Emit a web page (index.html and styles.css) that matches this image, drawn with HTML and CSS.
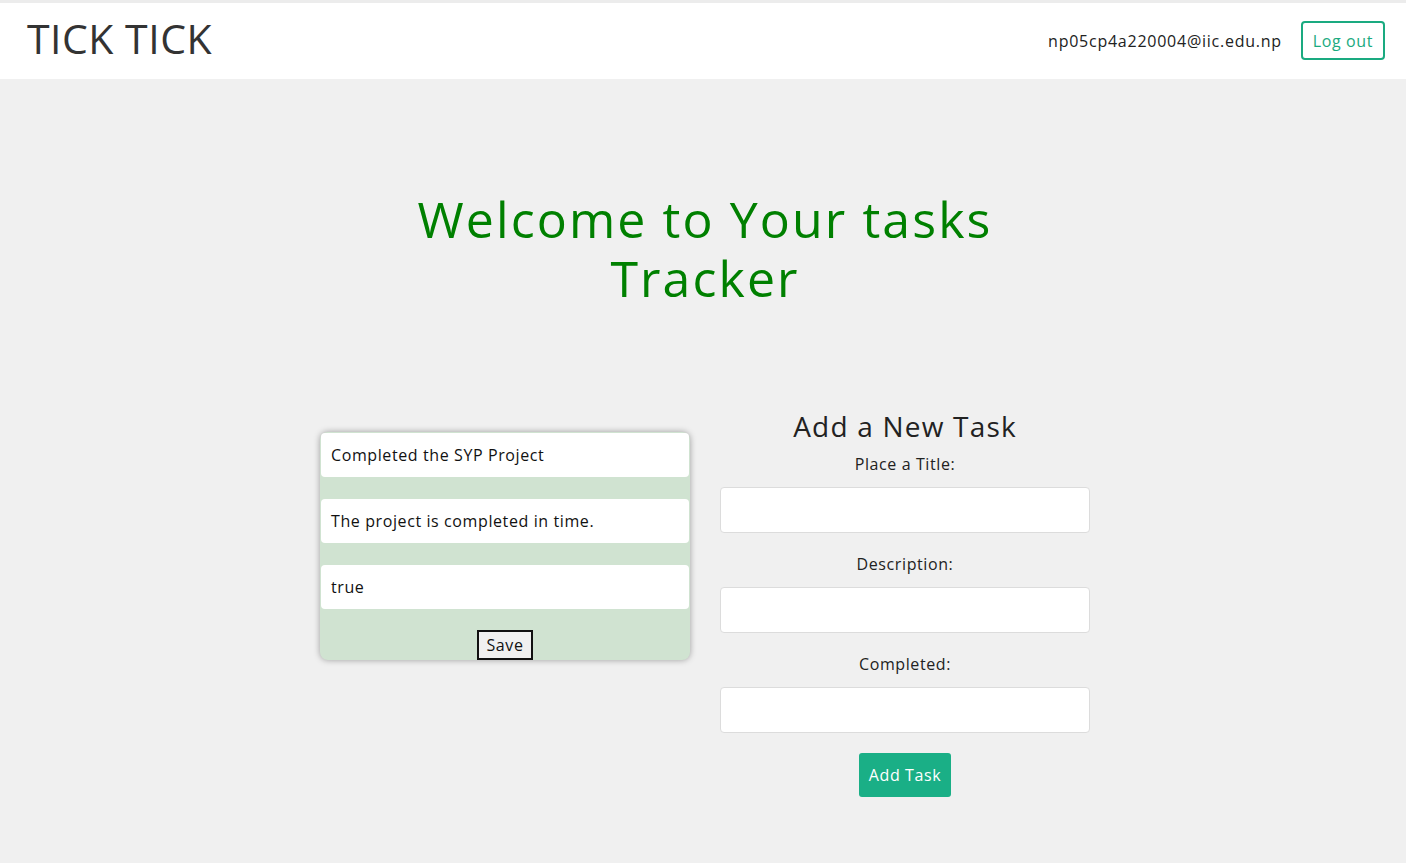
FILE: index.html
```html
<!DOCTYPE html>
<html lang="en">
<head>
<meta charset="utf-8">
<title>TICK TICK</title>
<link rel="stylesheet" href="styles.css">
</head>
<body>
<header class="topbar">
  <div class="brand">TICK TICK</div>
  <div class="user">
    <span class="email">np05cp4a220004@iic.edu.np</span>
    <button class="logout">Log out</button>
  </div>
</header>
<main class="main">
  <h1 class="welcome">Welcome to Your tasks Tracker</h1>
  <div class="content">
    <div class="card">
      <div class="field">Completed the SYP Project</div>
      <div class="field">The project is completed in time.</div>
      <div class="field">true</div>
      <div class="save-row"><button class="save">Save</button></div>
    </div>
    <form class="task-form">
      <h2 class="form-title">Add a New Task</h2>
      <label class="label">Place a Title:</label>
      <input class="input" type="text">
      <label class="label">Description:</label>
      <input class="input" type="text">
      <label class="label">Completed:</label>
      <input class="input" type="text">
      <button type="button" class="add">Add Task</button>
    </form>
  </div>
</main>
</body>
</html>
```

FILE: styles.css
```css
* { box-sizing: border-box; }
html, body { margin: 0; padding: 0; }
body {
  background: #f0f0f0;
  font-family: "Open Sans", "DejaVu Sans", sans-serif;
  color: #222;
  min-height: 863px;
  letter-spacing: 0.6px;
}
.topbar {
  background: #fff;
  border-top: 3px solid #ececec;
  height: 79px;
  display: flex;
  align-items: center;
  justify-content: space-between;
  padding: 0 21px 0 27px;
}
.brand {
  font-size: 41px;
  color: #333;
  letter-spacing: 0.5px;
  margin-top: -6px;
}
.user { display: flex; align-items: center; gap: 19px; margin-top: -1px; }
.email { font-size: 16px; color: #222; letter-spacing: 0.75px; }
.logout {
  font-family: inherit;
  font-size: 16px;
  letter-spacing: 0.6px;
  color: #1aaa80;
  background: #fff;
  border: 2px solid #1aaa80;
  border-radius: 4px;
  height: 39px;
  padding: 0 10px;
}
.main { padding-top: 111px; }
.welcome {
  margin: 0 auto;
  width: 620px;
  text-align: center;
  color: #008000;
  font-size: 50px;
  font-weight: 500;
  line-height: 59px;
  letter-spacing: 2.1px;
  position: relative;
  left: 2px;
}
.content {
  display: flex;
  justify-content: center;
  align-items: flex-start;
  gap: 30px;
  margin-top: 101px;
  padding-left: 4px;
}
.card {
  width: 370px;
  margin-top: 23px;
  background: #d0e3d1;
  border-radius: 8px;
  box-shadow: 0 0 6px rgba(0,0,0,0.35);
  padding: 1px 1px 0;
  display: flex;
  flex-direction: column;
  gap: 22px;
}
.field {
  background: #fff;
  height: 44px;
  border-radius: 4px;
  padding: 0 10px;
  display: flex;
  align-items: center;
  font-size: 16px;
  color: #111;
}
.save-row { display: flex; justify-content: center; margin-top: -1px; }
.save {
  font-family: inherit;
  font-size: 16px;
  letter-spacing: 0.6px;
  color: #111;
  background: #f0f0f0;
  border: 2px solid #111;
  height: 30px;
  width: 56px;
  padding: 0;
}
.task-form {
  width: 370px;
  display: flex;
  flex-direction: column;
  align-items: center;
}
.form-title {
  margin: 0 0 9px;
  font-size: 28px;
  font-weight: 500;
  line-height: 34px;
  letter-spacing: 1.2px;
  color: #222;
}
.label {
  font-size: 16px;
  line-height: 20px;
  color: #222;
  margin-top: 2px;
}
.input {
  width: 370px;
  height: 46px;
  background: #fff;
  border: 1px solid #dcdcdc;
  border-radius: 4px;
  margin: 13px 0 19px;
}
.input:last-of-type { margin-bottom: 21px; }
.add {
  font-family: inherit;
  margin-top: -1px;
  width: 92px;
  height: 44px;
  background: #1aaf86;
  color: #fff;
  border: none;
  border-radius: 3px;
  font-size: 16px;
  letter-spacing: 0.6px;
}
```
